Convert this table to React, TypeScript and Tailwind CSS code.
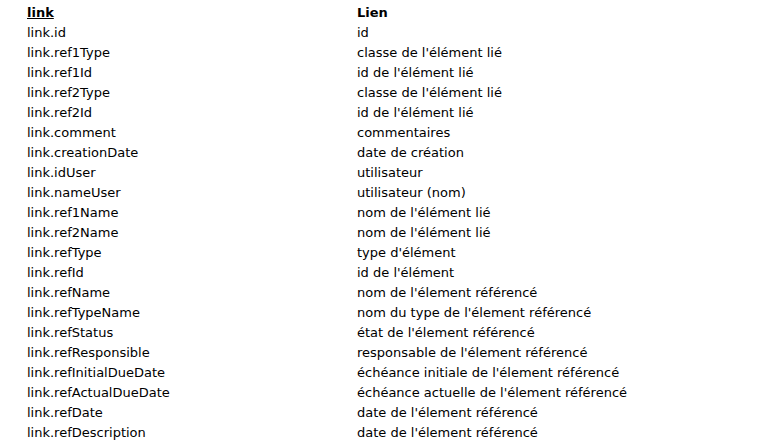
import React from "react";

const rows: [string, string][] = [
  ["link.id", "id"],
  ["link.ref1Type", "classe de l'élément lié"],
  ["link.ref1Id", "id de l'élément lié"],
  ["link.ref2Type", "classe de l'élément lié"],
  ["link.ref2Id", "id de l'élément lié"],
  ["link.comment", "commentaires"],
  ["link.creationDate", "date de création"],
  ["link.idUser", "utilisateur"],
  ["link.nameUser", "utilisateur (nom)"],
  ["link.ref1Name", "nom de l'élément lié"],
  ["link.ref2Name", "nom de l'élément lié"],
  ["link.refType", "type d'élément"],
  ["link.refId", "id de l'élément"],
  ["link.refName", "nom de l'élement référencé"],
  ["link.refTypeName", "nom du type de l'élement référencé"],
  ["link.refStatus", "état de l'élement référencé"],
  ["link.refResponsible", "responsable de l'élement référencé"],
  ["link.refInitialDueDate", "échéance initiale de l'élement référencé"],
  ["link.refActualDueDate", "échéance actuelle de l'élement référencé"],
  ["link.refDate", "date de l'élement référencé"],
  ["link.refDescription", "date de l'élement référencé"],
];

export default function App() {
  return (
    <div className="w-[777px] h-[446px] bg-white overflow-hidden pl-[27px] pt-[3px] text-[13px] text-black [font-family:'DejaVu_Sans',Verdana,sans-serif]">
      <div className="flex h-[20px] items-center font-bold">
        <div className="w-[330px]"><span className="underline">link</span></div>
        <div>Lien</div>
      </div>
      {rows.map(([k, v]) => (
        <div key={k} className="flex h-[20px] items-center">
          <div className="w-[330px]">{k}</div>
          <div>{v}</div>
        </div>
      ))}
    </div>
  );
}
